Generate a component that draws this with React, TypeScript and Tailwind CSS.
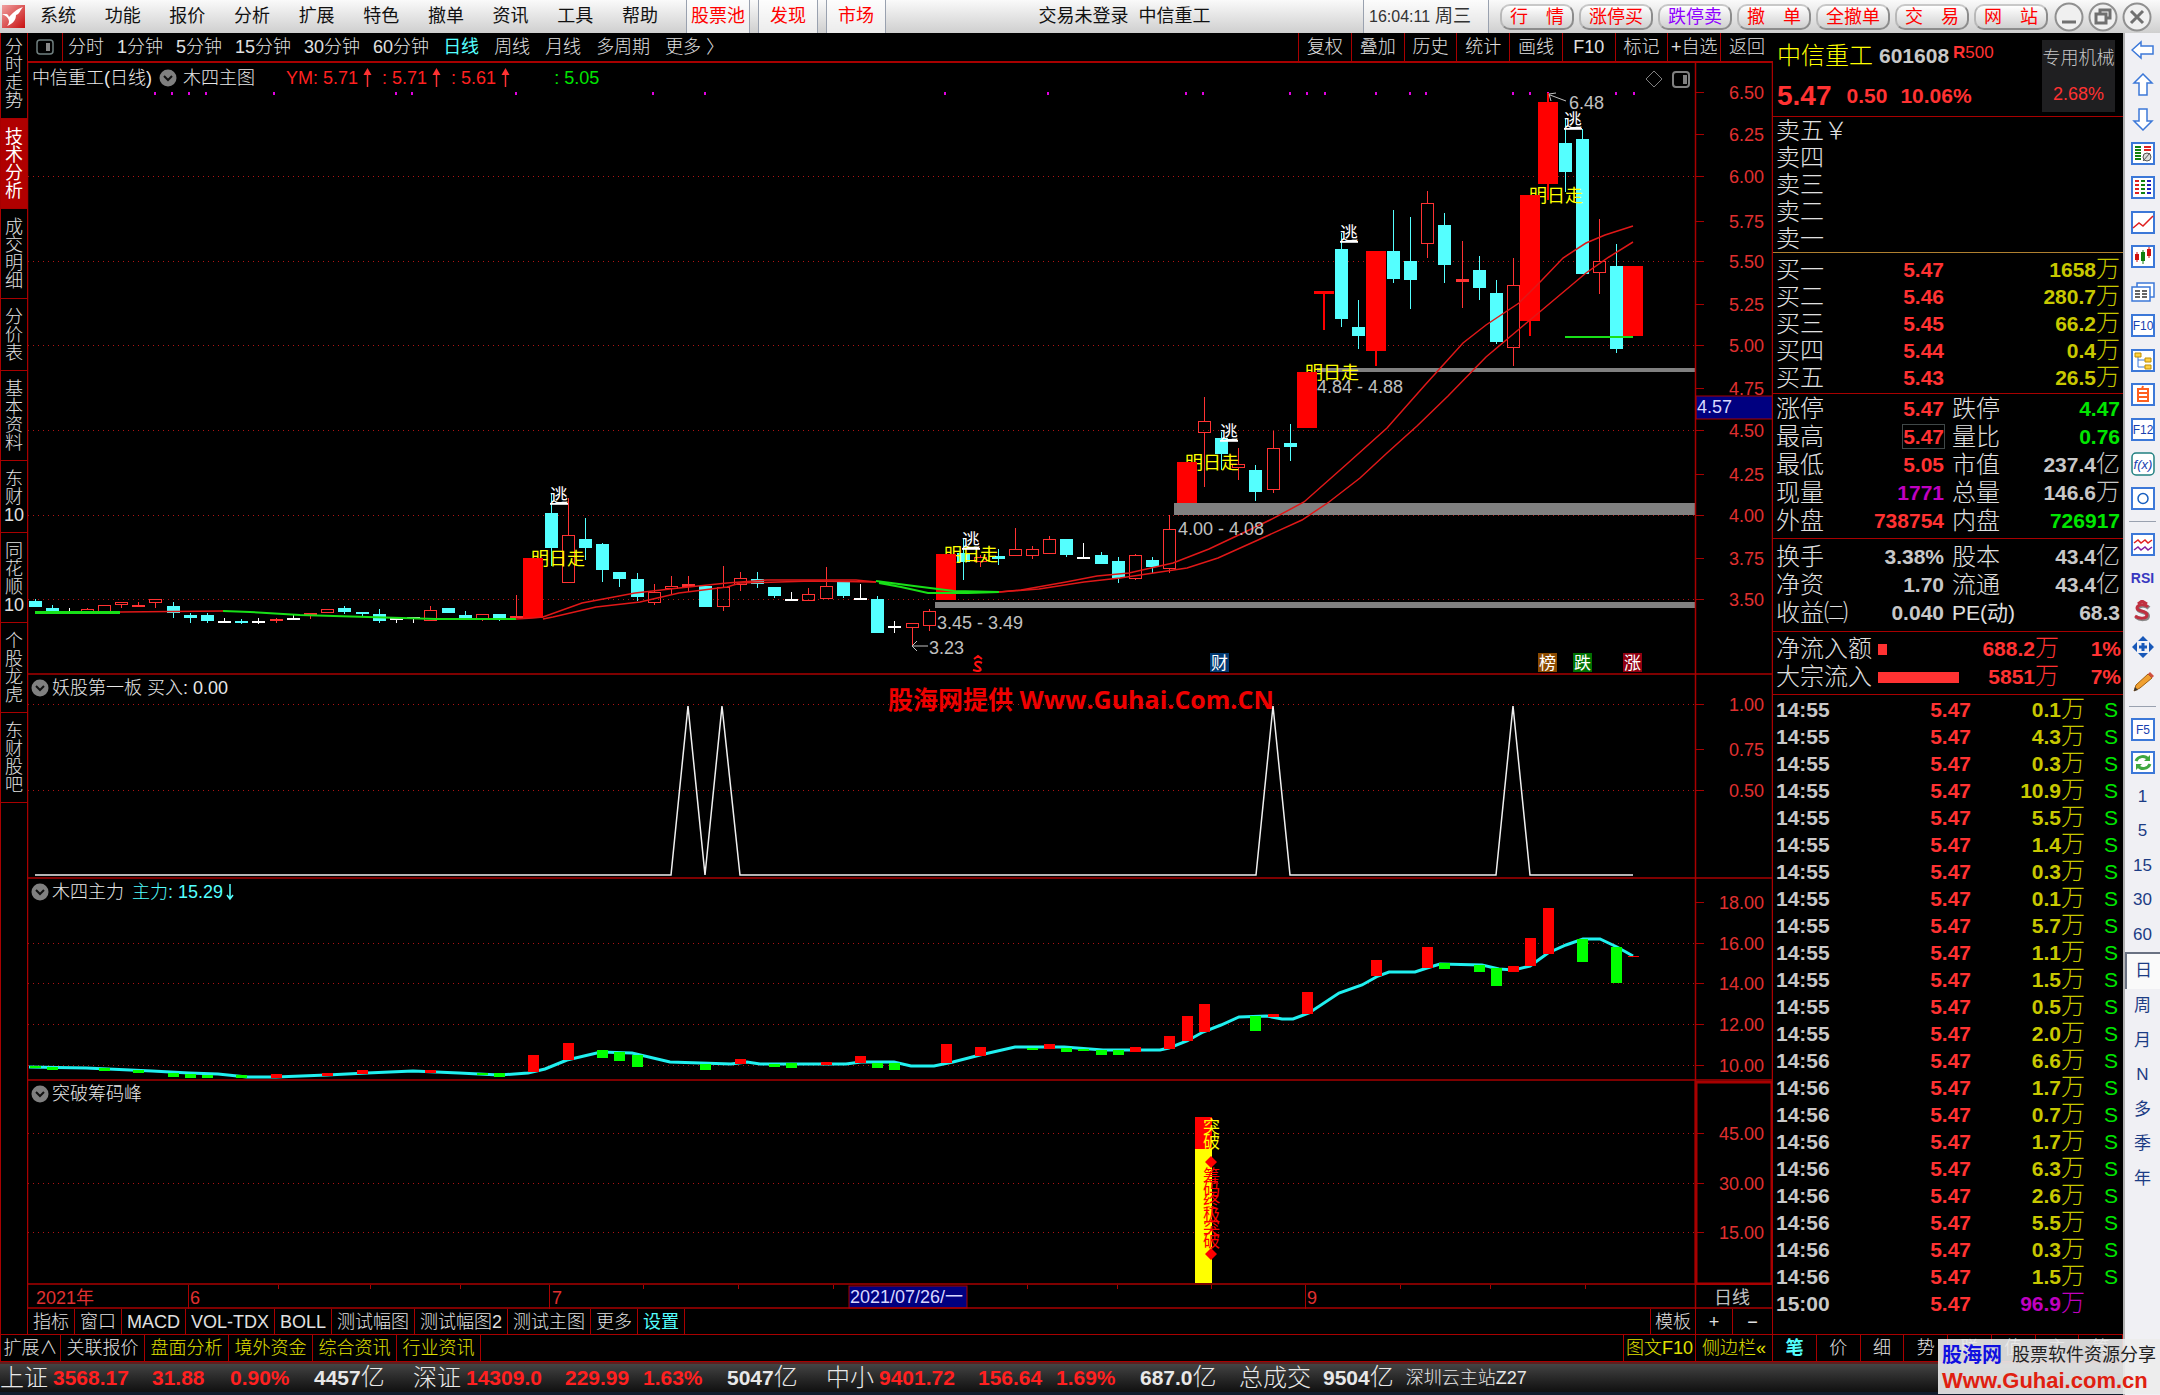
import React from "react";

const FRAME = "#a80000";
const RED = "#ff3232";
const CYAN = "#54ffff";

const menus = ["系统", "功能", "报价", "分析", "扩展", "特色", "撤单", "资讯", "工具", "帮助"];
const hotMenus = ["股票池", "发现", "市场"];
const tradeButtons = ["行　情", "涨停买", "跌停卖", "撤　单", "全撤单", "交　易", "网　站"];
const minuteTabs = ["分时", "1分钟", "5分钟", "15分钟", "30分钟", "60分钟"];
const periodTabs = ["日线", "周线", "月线", "多周期", "更多 〉"];
const chartTools = ["复权", "叠加", "历史", "统计", "画线", "F10", "标记", "+自选", "返回"];
const sideTabs = [
  ["分", "时", "走", "势"],
  ["技", "术", "分", "析"],
  ["成", "交", "明", "细"],
  ["分", "价", "表"],
  ["基", "本", "资", "料"],
  ["东", "财", "10"],
  ["同", "花", "顺", "10"],
  ["个", "股", "龙", "虎"],
  ["东", "财", "股", "吧"],
];
const indicatorTabs = ["指标", "窗口", "MACD", "VOL-TDX", "BOLL", "测试幅图", "测试幅图2", "测试主图", "更多", "设置"];
const linkTabs = ["关联报价", "盘面分析", "境外资金", "综合资讯", "行业资讯"];
const detailTabs = ["笔", "价", "细", "势", "联", "值", "主", "筹"];

// [kind, body top, body bottom, high, low]
// r hollow, f filled red, c cyan, w white, R limit up
type Candle = [string, number, number, number, number];
const candles: Candle[] = [
  ["c", 601, 607, 599, 607], ["c", 608, 612, 605, 612], ["w", 611, 613, 608, 613], ["r", 609, 612, 608, 612],
  ["r", 605, 612, 605, 612], ["r", 602, 605, 602, 608], ["f", 605, 607, 602, 607], ["r", 599, 603, 599, 608],
  ["c", 606, 613, 602, 618], ["c", 615, 618, 613, 623], ["c", 615, 621, 613, 623], ["w", 621, 623, 618, 623],
  ["c", 621, 623, 619, 624], ["w", 621, 623, 618, 624], ["f", 619, 621, 618, 623], ["w", 618, 620, 614, 620],
  ["r", 613, 615, 613, 619], ["r", 609, 613, 609, 613], ["c", 608, 612, 606, 614], ["c", 612, 614, 612, 617],
  ["c", 614, 621, 609, 623], ["w", 618, 620, 618, 623], ["w", 617, 619, 617, 623], ["r", 610, 621, 606, 621],
  ["c", 608, 613, 608, 613], ["c", 615, 618, 611, 618], ["r", 614, 620, 614, 621], ["c", 614, 618, 614, 621],
  ["r", 616, 618, 595, 618], ["R", 558, 618, 558, 618], ["c", 513, 548, 493, 566], ["r", 535, 583, 498, 583],
  ["c", 539, 548, 518, 560], ["c", 544, 570, 543, 582], ["c", 572, 579, 572, 587], ["c", 579, 597, 573, 601],
  ["r", 592, 603, 584, 605], ["r", 586, 589, 576, 594], ["f", 584, 587, 576, 592], ["c", 586, 607, 586, 607],
  ["r", 587, 607, 566, 611], ["r", 578, 585, 572, 591], ["c", 579, 584, 572, 588], ["c", 587, 596, 587, 598],
  ["w", 599, 600, 592, 600], ["r", 594, 601, 588, 601], ["r", 586, 599, 567, 599], ["c", 581, 596, 581, 598],
  ["w", 598, 599, 584, 599], ["c", 599, 633, 596, 633], ["w", 626, 628, 621, 633], ["r", 623, 628, 623, 647],
  ["r", 611, 626, 609, 631], ["R", 554, 600, 554, 600], ["c", 553, 562, 539, 580], ["r", 557, 562, 555, 567],
  ["c", 556, 559, 549, 565], ["r", 549, 556, 528, 556], ["r", 549, 556, 546, 559], ["r", 539, 554, 536, 554],
  ["c", 539, 555, 539, 557], ["w", 557, 559, 543, 558], ["c", 555, 564, 552, 564], ["c", 561, 578, 557, 583],
  ["r", 555, 579, 554, 580], ["c", 560, 567, 557, 573], ["r", 529, 569, 515, 573], ["R", 462, 503, 462, 503],
  ["r", 421, 433, 397, 487], ["c", 438, 454, 432, 470], ["r", 464, 468, 448, 480], ["c", 470, 492, 465, 501],
  ["r", 448, 490, 431, 493], ["c", 443, 447, 424, 461], ["R", 372, 428, 372, 428], ["R", 291, 294, 291, 330],
  ["c", 249, 319, 233, 327], ["c", 327, 336, 300, 349], ["R", 251, 351, 251, 366], ["c", 251, 279, 210, 283],
  ["c", 261, 280, 217, 309], ["r", 203, 244, 191, 258], ["c", 225, 265, 213, 283], ["f", 279, 282, 241, 308],
  ["c", 270, 288, 256, 300], ["c", 293, 342, 280, 344], ["r", 285, 348, 258, 366], ["R", 195, 321, 195, 336],
  ["R", 102, 184, 93, 200], ["c", 143, 172, 118, 192], ["c", 139, 274, 129, 274], ["r", 261, 273, 219, 294],
  ["c", 266, 349, 244, 353], ["R", 266, 336, 266, 336],
];
const barX = (i: number) => Math.round(35 + 17.188 * i);

const dots = [155, 172, 189, 206, 274, 396, 412, 516, 653, 705, 945, 1048, 1186, 1203, 1290, 1307, 1325, 1376, 1410, 1426, 1513, 1530, 1548, 1616, 1634];

// [index, top, bottom]
const redBars = [
  [14, 1074, 1078], [17, 1073, 1076], [19, 1070, 1074], [23, 1070, 1073], [29, 1055, 1072], [31, 1043, 1060],
  [41, 1059, 1064], [46, 1062, 1065], [48, 1056, 1063], [53, 1044, 1063], [55, 1047, 1056], [59, 1044, 1049],
  [64, 1047, 1052], [66, 1036, 1049], [67, 1016, 1041], [68, 1004, 1032], [72, 1014, 1017], [74, 992, 1014],
  [78, 960, 976], [81, 947, 968], [86, 966, 972], [87, 938, 966], [88, 908, 954], [93, 956, 957],
];
const greenBars = [
  [0, 1066, 1068], [1, 1067, 1070], [4, 1068, 1071], [6, 1070, 1073], [8, 1073, 1077], [9, 1074, 1078],
  [10, 1075, 1078], [12, 1075, 1078], [26, 1073, 1075], [27, 1073, 1077], [33, 1050, 1058], [34, 1052, 1061],
  [35, 1055, 1067], [39, 1064, 1070], [43, 1064, 1067], [44, 1063, 1068], [49, 1063, 1068], [50, 1063, 1070],
  [58, 1048, 1050], [60, 1048, 1052], [61, 1049, 1051], [62, 1050, 1055], [63, 1050, 1055], [71, 1016, 1031],
  [82, 963, 969], [84, 965, 972], [85, 968, 986], [90, 939, 962], [92, 947, 983],
];

const sells = ["卖五￥", "卖四", "卖三", "卖二", "卖一"];
const buys = [
  ["买一", "5.47", "1658万"],
  ["买二", "5.46", "280.7万"],
  ["买三", "5.45", "66.2万"],
  ["买四", "5.44", "0.4万"],
  ["买五", "5.43", "26.5万"],
];
const R = "text-[#ff3232]";
const G = "text-[#00e600]";
const W = "text-[#c8c8c8]";
const P = "text-[#c000c0]";
const stats = [
  ["涨停", "5.47", R, "跌停", "4.47", G],
  ["最高", "5.47", R, "量比", "0.76", G],
  ["最低", "5.05", R, "市值", "237.4亿", W],
  ["现量", "1771", P, "总量", "146.6万", W],
  ["外盘", "738754", R, "内盘", "726917", G],
];
const finance = [
  ["换手", "3.38%", W, "股本", "43.4亿", W],
  ["净资", "1.70", W, "流通", "43.4亿", W],
  ["收益㈡", "0.040", W, "PE(动)", "68.3", W],
];
const ticks = [
  ["14:55", "0.1"], ["14:55", "4.3"], ["14:55", "0.3"], ["14:55", "10.9"], ["14:55", "5.5"], ["14:55", "1.4"],
  ["14:55", "0.3"], ["14:55", "0.1"], ["14:55", "5.7"], ["14:55", "1.1"], ["14:55", "1.5"], ["14:55", "0.5"],
  ["14:55", "2.0"], ["14:56", "6.6"], ["14:56", "1.7"], ["14:56", "0.7"], ["14:56", "1.7"], ["14:56", "6.3"],
  ["14:56", "2.6"], ["14:56", "5.5"], ["14:56", "0.3"], ["14:56", "1.5"], ["15:00", "96.9"],
];
const indexes = [
  ["上证", "3568.17", "31.88", "0.90%", "4457亿"],
  ["深证", "14309.0", "229.99", "1.63%", "5047亿"],
  ["中小", "9401.72", "156.64", "1.69%", "687.0亿"],
];

// digits in bold, the 万/亿 unit lighter and larger
const Amount = ({ value }: { value: string }) => {
  const unit = value.match(/[万亿]$/);
  if (!unit) return <>{value}</>;
  return (
    <>
      {value.slice(0, -1)}
      <span className="text-[24px] leading-[20px] font-light">{unit[0]}</span>
    </>
  );
};

const Chevron = () => (
  <svg width="18" height="18" viewBox="0 0 18 18" className="shrink-0">
    <circle cx="9" cy="9" r="8.5" fill="#808080" />
    <path d="M5 7l4 4 4-4" fill="none" stroke="#111" strokeWidth="2" />
  </svg>
);

const UpArrow = () => (
  <svg width="9" height="20" viewBox="0 0 9 20" className="shrink-0">
    <path d="M4.5 19V4" stroke={RED} strokeWidth="1.5" />
    <path d="M0.5 7L4.5 0l4 7z" fill={RED} />
  </svg>
);

const Grid = ({ ys }: { ys: number[] }) => (
  <g stroke="#b01414" strokeWidth="1" strokeDasharray="1 4">
    {ys.map((y) => (
      <path key={y} d={`M28 ${y}.5H1695`} />
    ))}
  </g>
);

const Axis = ({ labels }: { labels: [number, string][] }) => (
  <g>
    {labels.map(([y, label]) => (
      <g key={label}>
        <path d={`M1696 ${y}.5h8`} stroke={FRAME} />
        <text x="1764" y={y + 7} textAnchor="end" fontSize="18" fill="#e03030">
          {label}
        </text>
      </g>
    ))}
  </g>
);

const Frame = ({ top, bottom }: { top: number; bottom: number }) => (
  <path
    d={`M27.5 ${top}V${bottom}M1695.5 ${top}V${bottom}M1772.5 ${top}V${bottom}M27 ${bottom - 1}H1773`}
    stroke={FRAME}
    strokeWidth="1.5"
    fill="none"
  />
);

const CandleShape = ({ data, index }: { data: Candle; index: number }) => {
  const [kind, top, bottom, high, low] = data;
  const x = barX(index);
  if (kind === "R") {
    return (
      <g fill="#ff0000">
        <rect x={x - 10} y={top} width="20" height={bottom - top} />
        <rect x={x - 1} y={high} width="2" height={low - high} />
      </g>
    );
  }
  if (kind === "r") {
    return (
      <g fill="none" stroke={RED} strokeWidth="1">
        <path d={`M${x + 0.5} ${high}V${top}M${x + 0.5} ${bottom}V${low}`} />
        <rect x={x - 5.5} y={top + 0.5} width="12" height={Math.max(bottom - top - 1, 1)} />
      </g>
    );
  }
  const color = kind === "c" ? CYAN : kind === "f" ? RED : "#ffffff";
  return (
    <g fill={color}>
      <rect x={x - 6} y={top} width="13" height={Math.max(bottom - top, 2)} />
      <rect x={x} y={high} width="1" height={low - high} />
    </g>
  );
};

const Tag = ({ x, fill, children }: { x: number; fill: string; children: string }) => (
  <g>
    <rect x={x} y="653" width="19" height="19" fill={fill} />
    <text x={x + 1} y="669" fontSize="17" fill="#fff">
      {children}
    </text>
  </g>
);

const PriceChart = () => (
  <svg viewBox="27 63 1746 612" className="block w-full">
    <g shapeRendering="crispEdges">
      <Grid ys={[176, 261, 345, 430, 515, 599]} />
      <g fill="#808080">
        <rect x="935" y="602" width="760" height="6" />
        <rect x="1174" y="503" width="521" height="12" />
        <rect x="1317" y="368" width="378" height="4" />
      </g>
      {dots.map((x) => (
        <rect key={x} x={x - 1} y="92" width="2" height="3" fill="#e000e0" />
      ))}
      {candles.map((c, i) => (c[0] === "R" ? null : <CandleShape key={i} data={c} index={i} />))}
    </g>
    <g fontSize="18" fill="#ffff00">
      <text x="531" y="565">明日走</text>
      <text x="944" y="561">明日走</text>
      <text x="1185" y="469">明日走</text>
      <text x="1305" y="379">明日走</text>
      <text x="1529" y="202">明日走</text>
    </g>
    <g shapeRendering="crispEdges">
      {candles.map((c, i) => (c[0] === "R" ? <CandleShape key={i} data={c} index={i} /> : null))}
    </g>
    <g fill="none" stroke="#e01818" strokeWidth="1.5">
      <path d="M120 612L223 611M516 619L533 618" />
      <path d="M533 618L543 617 582 603 635 593 679 588 727 583 767 580 856 580 876 582" />
      <path d="M543 619L553 617 596 607 640 602 679 593 727 587 740 583 812 581 876 582" />
      <path d="M999 592L1021 590 1066 582 1097 576 1129 573 1173 563 1209 549 1245 532 1270 520 1304 502 1348 463 1387 428 1425 385 1463 343 1486 325 1519 303 1542 280 1563 258 1586 243 1605 235 1633 226" />
      <path d="M999 592L1039 589 1084 582 1120 578 1187 568 1218 558 1258 540 1302 520 1329 502 1360 478 1387 453 1417 426 1448 396 1486 357 1524 325 1542 310 1586 273 1609 257 1633 242" />
    </g>
    <g fill="none" stroke="#18e018" strokeWidth="2">
      <path d="M35 612H120M223 611L250 612 300 615 368 617 436 619 516 619" />
      <path d="M35 613H120" />
      <path d="M876 581L914 586 954 591 999 592M879 583L901 587 928 593 968 593 999 592" />
      <path d="M1565 337H1633" />
    </g>
    <g fontSize="18" fill="#fff">
      <text x="550" y="502" textDecoration="underline">逃</text>
      <text x="962" y="547" textDecoration="underline">逃</text>
      <text x="1220" y="439" textDecoration="underline">逃</text>
      <text x="1340" y="240" textDecoration="underline">逃</text>
      <text x="1564" y="127" textDecoration="underline">逃</text>
    </g>
    <g fontSize="18" fill="#c0c0c0">
      <text x="1317" y="393">4.84 - 4.88</text>
      <text x="1178" y="535">4.00 - 4.08</text>
      <text x="937" y="629">3.45 - 3.49</text>
      <text x="929" y="654">3.23</text>
      <text x="1569" y="109">6.48</text>
    </g>
    <g fill="none" stroke="#c0c0c0">
      <path d="M928 646H912M917 641L912 646 917 651" />
      <path d="M1566 101L1550 95M1556 93L1549 94 1551 101" />
    </g>
    <g fill="none" stroke="#ff1010" strokeWidth="2">
      <path d="M974 659l4-3 4 3M982 663c-6-3-9 1-5 3s6 5 0 5l-4-1" />
    </g>
    <Tag x={1210} fill="#003870">财</Tag>
    <Tag x={1538} fill="#8a4a00">榜</Tag>
    <Tag x={1573} fill="#007000">跌</Tag>
    <Tag x={1623} fill="#900010">涨</Tag>
    <path d="M1654 71l8 8-8 8-8-8z" fill="none" stroke="#808080" />
    <rect x="1673" y="72" width="16" height="15" rx="3" fill="none" stroke="#808080" strokeWidth="2" />
    <rect x="1683" y="75" width="4" height="9" fill="#808080" />
    <Axis
      labels={[
        [92, "6.50"], [134, "6.25"], [176, "6.00"], [221, "5.75"], [261, "5.50"], [304, "5.25"], [345, "5.00"],
        [388, "4.75"], [430, "4.50"], [474, "4.25"], [515, "4.00"], [558, "3.75"], [599, "3.50"],
      ]}
    />
    <rect x="1696" y="396" width="77" height="23" fill="#000080" stroke={FRAME} />
    <text x="1697" y="413" fontSize="18" fill="#d8d8ff">4.57</text>
    <Frame top={63} bottom={675} />
  </svg>
);

const SignalChart = () => (
  <svg viewBox="27 675 1746 204" className="block w-full">
    <g shapeRendering="crispEdges">
      <Grid ys={[704, 790]} />
    </g>
    <path
      d="M35 875H671L688 706 705 875 722 706 740 875H1256L1273 706 1290 875H1496L1513 706 1530 875H1633"
      fill="none"
      stroke="#f0f0f0"
      strokeWidth="1.5"
    />
    <Axis labels={[[704, "1.00"], [749, "0.75"], [790, "0.50"]]} />
    <Frame top={675} bottom={879} />
  </svg>
);

const ForceChart = () => (
  <svg viewBox="27 879 1746 202" className="block w-full">
    <g shapeRendering="crispEdges">
      <Grid ys={[943, 983, 1024, 1065]} />
    </g>
    <path
      d="M29 1067L86 1068 152 1071 189 1073 218 1074 247 1077 276 1077 327 1075 367 1073 413 1071 459 1073 499 1075 528 1073 545 1069 567 1060 601 1052 632 1053 670 1062 731 1064 747 1062 760 1064 846 1064 861 1062 894 1062 911 1066 934 1066 953 1062 980 1055 1015 1047 1064 1047 1103 1050 1160 1050 1169 1048 1187 1041 1203 1032 1221 1025 1239 1017 1267 1016 1282 1019 1293 1019 1309 1013 1339 993 1362 985 1378 976 1389 972 1415 972 1427 968 1440 964 1482 965 1499 969 1514 970 1530 966 1548 953 1566 945 1583 939 1600 939 1617 947 1633 956"
      fill="none"
      stroke="#20f0f0"
      strokeWidth="3"
    />
    <g shapeRendering="crispEdges">
      {redBars.map(([i, top, bottom]) => (
        <rect key={i} x={barX(i) - 5} y={top} width="11" height={bottom - top} fill="#ff0000" />
      ))}
      {greenBars.map(([i, top, bottom]) => (
        <rect key={i} x={barX(i) - 5} y={top} width="11" height={bottom - top} fill="#00ff00" />
      ))}
    </g>
    <Axis labels={[[902, "18.00"], [943, "16.00"], [983, "14.00"], [1024, "12.00"], [1065, "10.00"]]} />
    <Frame top={879} bottom={1081} />
  </svg>
);

const PeakChart = () => (
  <svg viewBox="27 1081 1746 204" className="block w-full">
    <g shapeRendering="crispEdges">
      <Grid ys={[1133, 1183, 1232]} />
      <rect x="1195" y="1117" width="17" height="32" fill="#ff0000" />
      <rect x="1195" y="1149" width="17" height="134" fill="#ffff00" />
    </g>
    <g fontSize="17" fill="#ffff00">
      <text x="1203" y="1133">突</text>
      <text x="1203" y="1148">破</text>
    </g>
    <g fontSize="17" fill="#ff0000">
      {["筹", "码", "终", "极", "突", "破"].map((char, i) => (
        <text key={i} x="1203" y={1182 + i * 13}>
          {char}
        </text>
      ))}
    </g>
    <path d="M1211 1156l6 6-6 6-6-6zM1211 1248l6 6-6 6-6-6z" fill="#ff0000" />
    <Axis labels={[[1133, "45.00"], [1183, "30.00"], [1232, "15.00"]]} />
    <Frame top={1081} bottom={1285} />
    <rect x="1696" y="1082" width="76" height="202" fill="none" stroke={FRAME} strokeWidth="3" />
  </svg>
);

const DateAxis = () => (
  <svg viewBox="27 1285 1746 24" className="block w-full">
    <path
      d="M188.5 1285V1309M549.5 1285V1309M1305.5 1285V1309M278.5 1285v4M370.5 1285v4M460.5 1285v4M643.5 1285v4M738.5 1285v4M833.5 1285v4M1027.5 1285v4M1117.5 1285v4M1211.5 1285v4M1400.5 1285v4M1490.5 1285v4M1585.5 1285v4"
      stroke={FRAME}
    />
    <g fontSize="18" fill="#e03030">
      <text x="36" y="1304">2021年</text>
      <text x="190" y="1304">6</text>
      <text x="552" y="1304">7</text>
      <text x="1307" y="1304">9</text>
    </g>
    <rect x="849" y="1286" width="118" height="22" fill="#000080" stroke={FRAME} />
    <text x="850" y="1303" fontSize="18" fill="#d8d8ff">2021/07/26/一</text>
    <text x="1714" y="1304" fontSize="18" fill="#c0c0c0">日线</text>
    <Frame top={1285} bottom={1309} />
  </svg>
);

const Panel = ({ title, children }: { title: React.ReactNode; children: React.ReactNode }) => (
  <section className="relative">
    {children}
    <h2 className="absolute left-[4px] top-[4px] flex h-[18px] items-center gap-[3px] whitespace-pre text-[18px] leading-[18px] font-light text-[#e8e8e8]">
      {title}
    </h2>
  </section>
);

const Box = ({ children, color = "#3c78d8" }: { children?: React.ReactNode; color?: string }) => (
  <svg width="24" height="24" viewBox="0 0 24 24">
    <rect x="1" y="1" width="22" height="21" fill="#fff" stroke={color} strokeWidth="2" />
    {children}
  </svg>
);

const Arrow = ({ d }: { d: string }) => (
  <svg width="24" height="24" viewBox="0 0 24 24">
    <path d={d} fill="#fff" stroke="#3c78d8" strokeWidth="1.5" />
  </svg>
);

const BoxText = ({ children }: { children: string }) => (
  <Box>
    <text x="12" y="16" fontSize="12" textAnchor="middle" fill="#1840b0">
      {children}
    </text>
  </Box>
);

const chartIcons: [string, React.ReactNode][] = [
  ["后退", <Arrow d="M1 12l9-8v4h12v8H10v4z" />],
  ["上移", <Arrow d="M12 1l9 9h-5v12H8V10H3z" />],
  ["下移", <Arrow d="M12 23l9-9h-5V2H8v12H3z" />],
  [
    "报价",
    <Box>
      <path d="M4 5h6M4 8h6M4 11h6M4 14h6M4 17h6" stroke="#108010" strokeWidth="2" />
      <path d="M13 5h7M13 8h7" stroke="#e02020" strokeWidth="2" />
      <circle cx="16" cy="15" r="4" fill="#ddd" stroke="#555" />
      <path d="M12 19l7-8" stroke="#555" />
    </Box>,
  ],
  [
    "列表",
    <Box>
      <path d="M4 5h4M4 9h4M4 13h4M4 17h4" stroke="#e02020" strokeWidth="2" />
      <path d="M10 5h4M10 9h4M10 13h4M10 17h4" stroke="#108010" strokeWidth="2" />
      <path d="M16 5h4M16 9h4M16 13h4M16 17h4" stroke="#2020c0" strokeWidth="2" />
    </Box>,
  ],
  ["分时图", <Box><path d="M2 17l6-5 4 3 10-10" fill="none" stroke="#e02020" strokeWidth="1.5" /></Box>],
  [
    "K线图",
    <Box>
      <path d="M6 7v10M18 2v11" stroke="#d01010" />
      <path d="M12 5v14" stroke="#108010" />
      <path d="M4 9h4v6H4zM16 4h4v7h-4z" fill="#d01010" />
      <path d="M10 7h4v9h-4z" fill="#108010" />
    </Box>,
  ],
  [
    "窗口",
    <svg width="24" height="24" viewBox="0 0 24 24">
      <path d="M6 3h17v14H6z" fill="#fff" stroke="#3c78d8" strokeWidth="1.5" />
      <path d="M1 7h18v14H1z" fill="#fff" stroke="#3c78d8" strokeWidth="1.5" />
      <path d="M4 11h5M11 11h5M4 14h5M11 14h5M4 17h5M11 17h5" stroke="#333" strokeWidth="1.5" />
    </svg>,
  ],
  ["F10", <BoxText>F10</BoxText>],
  [
    "结构",
    <Box>
      <path d="M7 8v10h7M7 11h7" fill="none" stroke="#3c78d8" />
      <path d="M4 4h6v4H4zM14 9h6v4h-6zM14 16h6v4h-6z" fill="#ffd040" stroke="#c09000" />
    </Box>,
  ],
  ["自选", <Box><path d="M7 6h10v12H7zM7 10h10M7 14h10M12 3l-1 3" fill="none" stroke="#ff6020" strokeWidth="2" /></Box>],
  ["F12", <BoxText>F12</BoxText>],
  [
    "公式",
    <svg width="24" height="24" viewBox="0 0 24 24">
      <rect x="1" y="1" width="22" height="22" rx="4" fill="#fff" stroke="#208080" strokeWidth="1.5" />
      <text x="12" y="17" fontSize="13" fontStyle="italic" textAnchor="middle" fill="#1840b0">f(x)</text>
    </svg>,
  ],
  ["画圆", <Box><circle cx="12" cy="11.5" r="5" fill="none" stroke="#1860c0" strokeWidth="1.5" /></Box>],
];

const drawIcons: [string, React.ReactNode][] = [
  [
    "多图",
    <Box>
      <path d="M3 10l4-3 3 3 4-3 3 3 4-3" fill="none" stroke="#e02020" strokeWidth="1.5" />
      <path d="M3 17l4-3 3 3 4-3 3 3 4-3" fill="none" stroke="#8020a0" strokeWidth="1.5" />
    </Box>,
  ],
  ["RSI", <span className="text-[14px] font-bold text-[#3838c0]">RSI</span>],
  [
    "资金",
    <svg width="24" height="24" viewBox="0 0 24 24">
      <path d="M18 8c-4-4-11-2-11 1 0 4 10 2 10 7 0 4-8 4-12 1" fill="none" stroke="#888" strokeWidth="4" />
      <path d="M17 7c-4-4-11-2-11 1 0 4 10 2 10 7 0 4-8 4-12 1M7 4l4-3 5 3" fill="none" stroke="#c03040" strokeWidth="3" />
    </svg>,
  ],
  [
    "移动",
    <svg width="24" height="24" viewBox="0 0 24 24" fill="#1858b8">
      <path d="M12 1l5 5H7zM12 23l5-5H7zM1 12l5-5v10zM23 12l-5-5v10z" />
      <path d="M12 8v8M8 12h8" stroke="#1858b8" strokeWidth="3" />
    </svg>,
  ],
  [
    "画笔",
    <svg width="24" height="24" viewBox="0 0 24 24">
      <path d="M3 21l2-6L17 4l4 4L9 18z" fill="#f0a030" stroke="#a06010" />
      <path d="M17 4l2-2 4 4-2 2z" fill="#d05040" />
      <path d="M3 21l1-4 3 3z" fill="#333" />
    </svg>,
  ],
];

const periodIcons: [string, React.ReactNode][] = [
  ["F5", <BoxText>F5</BoxText>],
  [
    "刷新",
    <Box>
      <path d="M5 10c2-5 9-6 12-2M19 13c-2 5-9 6-12 2" fill="none" stroke="#40a840" strokeWidth="3" />
      <path d="M19 4v6h-6zM5 19v-6h6z" fill="#40a840" />
    </Box>,
  ],
  ...["1", "5", "15", "30", "60", "日", "周", "月", "N", "多", "季", "年"].map(
    (t): [string, React.ReactNode] => [t, <span className="text-[17px] text-[#1c3c84]">{t}</span>]
  ),
];

const ToolGroup = ({ items, className }: { items: [string, React.ReactNode][]; className: string }) => (
  <div className={`grid ${className}`}>
    {items.map(([name, icon]) => (
      <button
        key={name}
        aria-label={name}
        className={`flex items-center justify-center ${
          name === "日" ? "border-2 border-r-0 border-b-0 border-gray-500 bg-[#fafafa]" : ""
        }`}
      >
        {icon}
      </button>
    ))}
  </div>
);

const StatTable = ({ rows, className }: { rows: string[][]; className: string }) => (
  <div className={`border-b border-[#a80000] ${className}`}>
    <table className="w-full table-fixed whitespace-nowrap">
      <colgroup>
        <col className="w-[74px]" />
        <col className="w-[97px]" />
        <col className="w-[84px]" />
        <col />
      </colgroup>
      <tbody>
        {rows.map(([a, av, ac, b, bv, bc]) => (
          <tr key={a} className="leading-[28px]">
            <th className="p-0 pl-[3px] text-left text-[24px] font-light text-[#e0e0e0]">{a}</th>
            <td className={`p-0 text-right text-[21px] font-bold ${ac}`}>
              <span className={a === "最高" ? "outline-1 outline-[#404848]" : ""}>{av}</span>
            </td>
            <th
              className={`p-0 pl-[8px] text-left text-[#e0e0e0] ${
                b === "PE(动)" ? "text-[21px] font-normal" : "text-[24px] font-light"
              }`}
            >
              {b}
            </th>
            <td className={`p-0 pr-[3px] text-right text-[21px] font-bold ${bc}`}>
              <Amount value={bv} />
            </td>
          </tr>
        ))}
      </tbody>
    </table>
  </div>
);

const QuotePanel = () => (
  <aside className="flex w-[350px] shrink-0 flex-col">
    <header className="flex h-[84px] justify-between border-b border-[#a80000] pl-[4px]">
      <div>
        <div className="mt-[8px] flex h-[30px] items-center">
          <span className="text-[24px] font-light text-[#ffff00]">中信重工</span>
          <span className="ml-[6px] text-[21px] font-bold text-[#c8c8c8]">601608</span>
          <span className="ml-[4px] self-start text-[17px] leading-[24px] text-[#ff3232]">
            <b>R</b>500
          </span>
        </div>
        <div className="mt-[8px] flex h-[34px] items-center font-bold text-[#ff3232]">
          <span className="text-[28px]">5.47</span>
          <span className="ml-[15px] text-[21px]">0.50</span>
          <span className="ml-[13px] text-[21px]">10.06%</span>
        </div>
      </div>
      <div className="mt-[7px] mr-[8px] flex h-[72px] w-[73px] flex-col items-center justify-between bg-[#1f1f21] py-[7px] text-[18px] leading-[22px]">
        <span className="font-light text-[#c8c8c8]">专用机械</span>
        <span className="text-[#ff3232]">2.68%</span>
      </div>
    </header>

    <table className="w-full border-b border-[#b08030] leading-[27px]">
      <tbody>
        {sells.map((s) => (
          <tr key={s}>
            <th className="p-0 pl-[3px] text-left text-[24px] font-light text-[#e0e0e0]">{s}</th>
          </tr>
        ))}
      </tbody>
    </table>

    <div className="border-b border-[#a80000] pt-[3px] pb-[2px]">
      <table className="w-full table-fixed leading-[27px]">
        <tbody>
          {buys.map(([label, price, amount]) => (
            <tr key={label}>
              <th className="w-[74px] p-0 pl-[3px] text-left text-[24px] font-light text-[#e0e0e0]">{label}</th>
              <td className="w-[97px] p-0 text-right text-[21px] font-bold text-[#ff3232]">{price}</td>
              <td className="p-0 pr-[3px] text-right text-[21px] font-bold text-[#c8c800]">
                <Amount value={amount} />
              </td>
            </tr>
          ))}
        </tbody>
      </table>
    </div>

    <StatTable rows={stats} className="pt-[1px] pb-[3px]" />
    <StatTable rows={finance} className="py-[4px]" />

    <div className="border-b border-[#a80000] py-[3px] text-[#ff3232]">
      {[
        ["净流入额", "w-[9px]", "688.2万", "1%"],
        ["大宗流入", "w-[81px]", "5851万", "7%"],
      ].map(([label, bar, amount, pct]) => (
        <div key={label} className="flex h-[28px] items-center pr-[2px] pl-[3px] text-[21px] leading-[28px] font-bold">
          <span className="w-[102px] text-[24px] font-light text-[#e0e0e0]">{label}</span>
          <span className={`h-[11px] bg-[#ff3232] ${bar}`} />
          <span className="flex-1 text-right">
            <Amount value={amount} />
          </span>
          <span className="w-[62px] text-right">{pct}</span>
        </div>
      ))}
    </div>

    <table className="mt-[1px] w-full table-fixed text-[21px] leading-[27px] font-bold">
      <tbody>
        {ticks.map(([time, amount], i) => (
          <tr key={i}>
            <td className="w-[90px] p-0 pl-[3px] text-[#c8c8c8]">{time}</td>
            <td className="w-[108px] p-0 text-right text-[#ff3232]">5.47</td>
            <td className={`w-[114px] p-0 text-right ${time === "15:00" ? "text-[#c000c0]" : "text-[#c8c800]"}`}>
              <Amount value={`${amount}万`} />
            </td>
            <td className="p-0 pr-[5px] text-right font-normal text-[#00e600]">{time === "15:00" ? "" : "S"}</td>
          </tr>
        ))}
      </tbody>
    </table>

    <nav className="mt-auto grid h-[28px] grid-cols-8 border-y border-[#a80000] text-[18px] text-[#e0e0e0]">
      {detailTabs.map((t, i) => (
        <button key={t} className={`border-r border-[#a80000] ${i === 0 ? "font-bold text-[#54ffff]" : "font-light"}`}>
          {t}
        </button>
      ))}
    </nav>
  </aside>
);

const TopBar = () => (
  <header className="flex h-[33px] items-center bg-linear-to-b from-[#fafafa] to-[#cfcfcf] text-[18px] whitespace-nowrap text-[#111]">
    <svg width="28" height="28" viewBox="0 0 28 28">
      <defs>
        <linearGradient id="logo" x1="0" y1="0" x2="1" y2="1">
          <stop offset="0" stopColor="#f0a0a0" />
          <stop offset="1" stopColor="#c81010" />
        </linearGradient>
      </defs>
      <rect x="2" y="2" width="23" height="23" fill="url(#logo)" />
      <path d="M2 11c4 0 6-1 7 3 3-3 7-8 14-10-3 3-3 7-7 8 0 6-4 9-9 11 4-4 2-9-5-12z" fill="#fff" />
    </svg>
    <nav className="ml-[12px] flex w-[618px] justify-between">
      {menus.map((m) => (
        <button key={m}>{m}</button>
      ))}
    </nav>
    <div className="ml-[28px] flex gap-[8px] self-stretch">
      {hotMenus.map((m) => (
        <button key={m} className="border-x border-gray-400 bg-white/60 px-[4px] text-[#ff0000] last:px-[11px] [&:nth-child(2)]:px-[11px]">
          {m}
        </button>
      ))}
    </div>
    <h1 className="flex-1 text-center font-normal">交易未登录&nbsp; 中信重工</h1>
    <time className="flex w-[126px] items-center gap-[5px] self-stretch border-x border-gray-400 bg-white/40 pl-[5px] text-[#333]">
      <span className="text-[16px]">16:04:11</span>周三
    </time>
    <div className="ml-[11px] flex gap-[5px]">
      {tradeButtons.map((b) => (
        <button
          key={b}
          className={`h-[26px] w-[74px] rounded-[10px] border-2 border-[#8c8c8c] border-t-[#c8c8c8] border-l-[#b8b8b8] bg-linear-to-b from-white to-[#d0d0d0] leading-[22px] ${
            b === "跌停卖" ? "text-[#9000ff]" : "text-[#ff0000]"
          }`}
        >
          {b}
        </button>
      ))}
    </div>
    <div className="mr-[8px] ml-[6px] flex gap-[4px]">
      {[
        ["最小化", "M8 20h14"],
        ["还原", "M12 12V8h10v8h-4M8 12h10v9H8z"],
        ["关闭", "M9 9l12 12M21 9L9 21"],
      ].map(([label, d]) => (
        <button key={label} aria-label={label}>
          <svg width="30" height="30" viewBox="0 0 30 30" className="block">
            <circle cx="15" cy="15" r="13.5" fill="#f0f0f0" stroke="#909090" strokeWidth="2" />
            <path d={d} fill="none" stroke="#707070" strokeWidth="3" />
          </svg>
        </button>
      ))}
    </div>
  </header>
);

const StatusBar = () => (
  <footer className="flex h-[34px] items-center overflow-hidden border-t-2 border-[#5c2020] border-b-4 border-b-[#101c2c] bg-linear-to-b from-[#444444] to-[#101010] text-[21px] leading-[28px] font-bold whitespace-nowrap text-[#ff2020]">
    {indexes.map(([name, price, change, pct, amount]) => (
      <div key={name} className="flex w-[413px] shrink-0 items-center">
        <span className="w-[53px] text-[24px] font-light text-[#e8e8e8]">{name}</span>
        <span className="w-[99px]">{price}</span>
        <span className="w-[78px]">{change}</span>
        <span className="w-[84px]">{pct}</span>
        <span className="text-[#e8e8e8]">
          <Amount value={amount} />
        </span>
      </div>
    ))}
    <span className="mr-[12px] text-[24px] font-light text-[#e8e8e8]">总成交</span>
    <span className="text-[#e8e8e8]">
      <Amount value="9504亿" />
    </span>
    <span className="ml-[12px] text-[18px] font-light text-[#e8e8e8]">深圳云主站Z27</span>
  </footer>
);

const App = () => {
  return (
    <div className="relative flex min-h-screen w-full flex-col bg-black font-['Liberation_Sans','Noto_Sans_CJK_SC',sans-serif]">
      <TopBar />
      <div className="flex flex-1">
        <div className="flex min-w-0 flex-1 flex-col">
          <div className="flex flex-1">
            <main className="flex min-w-0 flex-1 flex-col">
              <div className="flex flex-1">
                <nav className="flex w-[27px] shrink-0 flex-col border-l border-[#a80000] text-[18px] leading-[18px] text-[#e0e0e0]">
                  {sideTabs.map((chars, i) => (
                    <button
                      key={chars.join("")}
                      className={`flex flex-col items-center border-b border-[#a80000] pb-[8px] ${
                        i === 0 ? "pt-[5px]" : "pt-[9px]"
                      } ${i === 1 ? "bg-[#b00000] font-normal text-white" : "font-light"}`}
                    >
                      {chars.map((c, j) => (
                        <span key={j}>{c}</span>
                      ))}
                    </button>
                  ))}
                </nav>

                <div className="flex min-w-0 flex-1 flex-col">
                  <div className="flex h-[30px] items-center border-b-2 border-l border-[#a80000] text-[18px] font-light whitespace-nowrap text-[#e0e0e0]">
                    <button aria-label="侧栏" className="flex h-full w-[35px] items-center justify-center border-r border-[#a80000]">
                      <svg width="18" height="16" viewBox="0 0 18 16">
                        <rect x="1" y="1" width="16" height="14" rx="3" fill="none" stroke="#708080" strokeWidth="1.5" />
                        <rect x="10" y="4" width="4" height="8" fill="#888" />
                      </svg>
                    </button>
                    <div className="ml-[5px] flex gap-[13px]">
                      {minuteTabs.map((t) => (
                        <button key={t}>{t}</button>
                      ))}
                    </div>
                    <div className="ml-[14px] flex gap-[15px]">
                      {periodTabs.map((t, i) => (
                        <button key={t} className={i === 0 ? "font-normal text-[#54ffff]" : ""}>
                          {t}
                        </button>
                      ))}
                    </div>
                    <div className="ml-auto grid h-full w-[475px] grid-cols-9">
                      {chartTools.map((t) => (
                        <button key={t} className="border-l border-[#a80000]">
                          {t}
                        </button>
                      ))}
                    </div>
                  </div>

                  <section className="relative">
                    <PriceChart />
                    <div className="absolute top-[5px] left-[5px] flex h-[20px] items-center text-[18px] leading-[20px] font-light whitespace-pre text-[#e8e8e8]">
                      <h2 className="mr-[7px]">中信重工(日线)</h2>
                      <Chevron />
                      <span className="mr-[31px] ml-[6px]">木四主图</span>
                      <span className="flex items-center gap-[5px] text-[#ff2020]">
                        YM: 5.71
                        <UpArrow /> : 5.71
                        <UpArrow /> : 5.61
                        <UpArrow />
                      </span>
                      <span className="ml-[44px] text-[#00e600]">: 5.05</span>
                    </div>
                  </section>
                  <Panel
                    title={
                      <>
                        <Chevron />
                        <span>妖股第一板 买入: 0.00</span>
                      </>
                    }
                  >
                    <SignalChart />
                    <p className="absolute top-[6px] left-[861px] text-[25px] leading-[36px] font-bold whitespace-nowrap text-[#ee0000] font-['Open_Sans','Noto_Sans_CJK_SC',sans-serif]">
                      股海网提供 Www.Guhai.Com.CN
                    </p>
                  </Panel>
                  <Panel
                    title={
                      <>
                        <Chevron />
                        <span>木四主力</span>
                        <span className="ml-[5px] text-[#54ffff]">主力: 15.29</span>
                        <svg width="8" height="18" viewBox="0 0 8 18">
                          <path d="M4 1v15M1 12l3 4 3-4" fill="none" stroke={CYAN} strokeWidth="1.5" />
                        </svg>
                      </>
                    }
                  >
                    <ForceChart />
                  </Panel>
                  <Panel
                    title={
                      <>
                        <Chevron />
                        <span>突破筹码峰</span>
                      </>
                    }
                  >
                    <PeakChart />
                  </Panel>
                  <DateAxis />

                  <div className="flex h-[25px] border-l border-[#a80000] text-[18px] font-light text-[#e0e0e0]">
                    {indicatorTabs.map((t) => (
                      <button
                        key={t}
                        className={`border-r border-[#a80000] px-[5px] leading-[24px] ${
                          t === "设置" ? "font-normal text-[#54ffff]" : ""
                        }`}
                      >
                        {t}
                      </button>
                    ))}
                    <button className="ml-auto border-x border-[#a80000] px-[4px]">模板</button>
                    <button className="w-[37px] border-r border-[#a80000]">+</button>
                    <button className="w-[40px] border-r border-[#a80000]">−</button>
                  </div>
                </div>
              </div>

              <div className="flex h-[28px] border-y border-[#a80000] text-[18px] font-light text-[#e0e000]">
                <button className="w-[61px] border-x border-[#a80000] text-[#e0e0e0]">扩展∧</button>
                {linkTabs.map((t, i) => (
                  <button key={t} className={`w-[84px] border-r border-[#a80000] ${i === 0 ? "text-[#e0e0e0]" : ""}`}>
                    {t}
                  </button>
                ))}
                <button className="ml-auto w-[73px] border-x border-[#a80000] whitespace-nowrap">图文F10</button>
                <button className="w-[77px] border-r border-[#a80000] whitespace-nowrap">侧边栏«</button>
              </div>
            </main>
            <QuotePanel />
          </div>
          <StatusBar />
        </div>

        <nav className="w-[37px] shrink-0 border-l-2 border-[#b0b0b0] bg-[#f0f0f4]">
          <ToolGroup items={chartIcons} className="h-[483px]" />
          <hr className="mx-[4px] my-[5px] border-gray-400" />
          <ToolGroup items={drawIcons} className="h-[173px]" />
          <hr className="mx-[4px] my-[6px] border-gray-400" />
          <ToolGroup items={periodIcons} className="h-[483px]" />
        </nav>
      </div>

      <div className="absolute right-0 bottom-[2px] w-[222px] bg-[#ececec]/90 px-[4px] pt-[3px] whitespace-nowrap">
        <div className="flex items-center justify-between leading-[26px]">
          <b className="text-[20px] text-[#1010e0]">股海网</b>
          <span className="text-[18px] text-[#222]">股票软件资源分享</span>
        </div>
        <a href="#guhai" className="block text-[22px] leading-[26px] font-bold text-[#e02010]">
          Www.Guhai.com.cn
        </a>
      </div>
    </div>
  );
};

export default App;
